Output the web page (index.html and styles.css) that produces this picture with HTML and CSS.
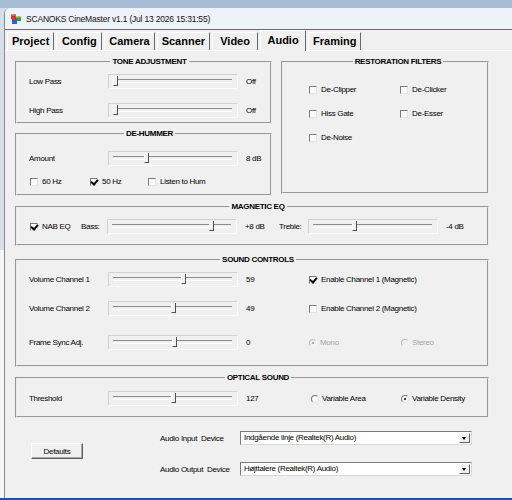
FILE: index.html
```html
<!DOCTYPE html>
<html lang="en">
<head>
    <meta charset="UTF-8">
    <title>SCANOKS CineMaster - Audio</title>
    <link rel="stylesheet" href="styles.css">
</head>
<body>

<div class="window">
    <div class="titlebar">
        <svg class="app-icon" width="12" height="12" viewBox="0 0 12 12">
            <rect x="1" y="1" width="5" height="5" fill="#d8322c"/>
            <rect x="6" y="3" width="5" height="5" fill="#3f9b3a"/>
            <rect x="2" y="6" width="5" height="5" fill="#2f63c8"/>
            <rect x="1" y="1" width="5" height="1.5" fill="#f07a6a"/>
            <rect x="6" y="3" width="5" height="1.5" fill="#8fd37f"/>
        </svg>
        <span>SCANOKS CineMaster v1.1 (Jul 13 2026 15:31:55)</span>
    </div>

    <div class="tabs">
        <div class="tab">Project</div>
        <div class="tab">Config</div>
        <div class="tab">Camera</div>
        <div class="tab">Scanner</div>
        <div class="tab">Video</div>
        <div class="tab active">Audio</div>
        <div class="tab">Framing</div>
    </div>

    <div class="panel">
        <div class="top-row">
            <div class="left-col">
                <fieldset class="group tone">
                    <legend>TONE ADJUSTMENT</legend>
                    <div class="sliders">
                        <span>Low Pass</span>
                        <div class="slider"><i class="thumb" style="left:4px"></i></div>
                        <span class="val">Off</span>
                        <span>High Pass</span>
                        <div class="slider"><i class="thumb" style="left:4px"></i></div>
                        <span class="val">Off</span>
                    </div>
                </fieldset>

                <fieldset class="group hum">
                    <legend>DE-HUMMER</legend>
                    <div class="sliders">
                        <span>Amount</span>
                        <div class="slider"><i class="thumb" style="left:35px"></i></div>
                        <span class="val">8 dB</span>
                    </div>
                    <div class="hum-checks">
                        <label class="check"><span class="cb"></span>60 Hz</label>
                        <label class="check"><span class="cb on"></span>50 Hz</label>
                        <label class="check"><span class="cb"></span>Listen to Hum</label>
                    </div>
                </fieldset>
            </div>

            <fieldset class="group restore">
                <legend>RESTORATION FILTERS</legend>
                <div class="filter-grid">
                    <label class="check"><span class="cb"></span>De-Clipper</label>
                    <label class="check"><span class="cb"></span>De-Clicker</label>
                    <label class="check"><span class="cb"></span>Hiss Gate</label>
                    <label class="check"><span class="cb"></span>De-Esser</label>
                    <label class="check"><span class="cb"></span>De-Noise</label>
                </div>
            </fieldset>
        </div>

        <fieldset class="group mag">
            <legend>MAGNETIC EQ</legend>
            <div class="eq-row">
                <label class="check nab"><span class="cb on"></span>NAB EQ</label>
                <span>Bass:</span>
                <div class="slider"><i class="thumb" style="left:101px"></i></div>
                <span class="val">+8 dB</span>
                <span>Treble:</span>
                <div class="slider"><i class="thumb" style="left:43px"></i></div>
                <span class="val">-4 dB</span>
            </div>
        </fieldset>

        <fieldset class="group sound">
            <legend>SOUND CONTROLS</legend>
            <div class="sound-grid">
                <span>Volume Channel 1</span>
                <div class="slider"><i class="thumb" style="left:72px"></i></div>
                <span class="val">59</span>
                <label class="check"><span class="cb on"></span>Enable Channel 1 (Magnetic)</label>

                <span>Volume Channel 2</span>
                <div class="slider"><i class="thumb" style="left:62px"></i></div>
                <span class="val">49</span>
                <label class="check"><span class="cb"></span>Enable Channel 2 (Magnetic)</label>

                <span class="last">Frame Sync Adj.</span>
                <div class="slider last"><i class="thumb" style="left:63px"></i></div>
                <span class="val last">0</span>
                <div class="radios last">
                    <label class="radio off"><span class="rb on"></span>Mono</label>
                    <label class="radio off"><span class="rb"></span>Stereo</label>
                </div>
            </div>
        </fieldset>

        <fieldset class="group optical">
            <legend>OPTICAL SOUND</legend>
            <div class="optical-grid">
                <span>Threshold</span>
                <div class="slider"><i class="thumb" style="left:62px"></i></div>
                <span class="val">127</span>
                <div class="radios">
                    <label class="radio"><span class="rb"></span>Variable Area</label>
                    <label class="radio"><span class="rb on"></span>Variable Density</label>
                </div>
            </div>
        </fieldset>

        <div class="bottom">
            <button class="btn">Defaults</button>
            <div class="devices">
                <span>Audio Input&nbsp; Device</span>
                <div class="combo"><span>Indgående linje (Realtek(R) Audio)</span><i class="drop"></i></div>
                <span>Audio Output&nbsp; Device</span>
                <div class="combo"><span>Højttalere (Realtek(R) Audio)</span><i class="drop"></i></div>
            </div>
        </div>
    </div>
</div>

</body>
</html>
```

FILE: styles.css
```css
* { box-sizing: border-box; }
body {
    margin: 0; width: 512px; height: 500px; overflow: hidden;
    padding: 8px 0 0 4px;
    background: linear-gradient(to bottom, #a7bdd6 0 8px, #d6dee8 8px 250px, #f7f7f7 250px 498px, #1d568f 498px);
    font-family: "Liberation Sans", Arial, sans-serif;
    font-size: 8px; letter-spacing: -0.3px; color: #000;
}

/* Window frame */
.window { width: 512px; height: 490px; background: #f0f0f0; border-left: 1px solid #8a8a8a; border-top-left-radius: 6px; overflow: hidden; display: flex; flex-direction: column; }
.titlebar { height: 22px; background: #eef3fa; display: flex; align-items: center; gap: 4px; padding-left: 5px; font-size: 8.5px; letter-spacing: -0.2px; color: #111; border-bottom: 1px solid #6c6c6c; }

/* Tabs */
.tabs { height: 21px; display: flex; align-items: flex-end; gap: 2px; padding-left: 2px; }
.tab { height: 19px; min-width: 46px; padding: 0 4px; text-align: center; font-weight: bold; font-size: 11px; letter-spacing: 0; line-height: 17px; background: #f0f0f0; border: 1px solid; border-color: #fff #6a6a6a #6a6a6a #fff; }
.tab.active { height: 21px; line-height: 19px; border-bottom: none; position: relative; z-index: 1; }

.panel { flex: 1; padding: 6px 0 0 10px; border-top: 1px solid #fff; margin-top: -1px; }

/* Group boxes */
.group { margin: 0; padding: 0 0 0 12px; min-width: 0; border: 2px groove #ececec; }
.group legend { margin: 0 auto; padding: 0 2px; font-weight: bold; line-height: 10px; }

.top-row { display: grid; grid-template-columns: 257px 208px; column-gap: 9px; }
.tone { height: 67px; padding-top: 7px; }
.hum { height: 67px; margin-top: 5px; padding-top: 12px; }
.restore { height: 137px; padding: 17px 0 0 26px; }
.mag { width: 474px; height: 44px; margin-top: 6px; padding-top: 7px; }
.sound { width: 474px; height: 112px; margin-top: 9px; padding-top: 7px; }
.optical { width: 474px; height: 45px; margin-top: 6px; padding-top: 8px; }

/* Sliders */
.sliders { display: grid; grid-template-columns: 79px 130px auto; row-gap: 14px; align-items: center; }
.slider { position: relative; width: 130px; height: 15px; border: 1px solid; border-color: #d2d2d2 #fbfbfb #fbfbfb #d2d2d2; }
.slider::before { content: ""; position: absolute; left: 4px; right: 5px; top: 4px; height: 2px; border-top: 1px solid #8c8c8c; border-bottom: 1px solid #fff; }
.thumb { position: absolute; top: 1px; width: 5px; height: 10px; background: #f0f0f0; border-left: 1px solid #fff; border-right: 1px solid #4f4f4f; border-bottom: 1px solid #4f4f4f; }
.val { padding-left: 8px; }

/* Checkboxes and radios */
.check, .radio { display: flex; align-items: center; gap: 4px; height: 11px; white-space: nowrap; }
.radio { gap: 3px; }
.cb { position: relative; width: 8px; height: 8px; background: #fbfbfb; border: 1px solid; border-color: #7a7a7a #e4e4e4 #e4e4e4 #7a7a7a; }
.cb.on::after { content: ""; position: absolute; left: 1px; top: -1px; width: 3px; height: 5px; border-right: 2px solid #000; border-bottom: 2px solid #000; transform: rotate(40deg); }
.rb { position: relative; width: 8px; height: 8px; border-radius: 50%; background: #fbfbfb; border: 1px solid; border-color: #7a7a7a #e4e4e4 #e4e4e4 #7a7a7a; }
.rb.on::after { content: ""; position: absolute; left: 2px; top: 2px; width: 2px; height: 2px; border-radius: 50%; background: #000; }
.radio.off { color: #a6a6a6; }
.radio.off .rb { background: #f0f0f0; border-color: #bdbdbd #f6f6f6 #f6f6f6 #bdbdbd; }
.radio.off .rb.on::after { background: #9a9a9a; }

.hum-checks { display: grid; grid-template-columns: 60px 58px auto; margin: 10px 0 0 1px; }
.filter-grid { display: grid; grid-template-columns: 91px auto; row-gap: 13px; }

.eq-row { display: grid; grid-template-columns: 52px 26px 130px 42px 29px 130px auto; align-items: center; }
.nab { margin-left: 1px; }

.sound-grid, .optical-grid { display: grid; grid-template-columns: 79px 130px 71px auto; row-gap: 14px; align-items: center; }
.optical-grid { grid-template-columns: 79px 130px 73px auto; }
.sound-grid .last { margin-top: 5px; }
.radios { display: grid; grid-template-columns: 92px auto; }
.optical-grid .radios { grid-template-columns: 90px auto; }

/* Bottom area */
.bottom { display: flex; align-items: flex-start; margin-top: 13px; }
.btn { margin: 12px 0 0 16px; width: 52px; height: 16px; padding: 0; font: inherit; letter-spacing: inherit; background: #f0f0f0; border: 1px solid; border-color: #fff #5f5f5f #5f5f5f #fff; box-shadow: inset -1px -1px #a8a8a8; }
.devices { margin-left: 77px; display: grid; grid-template-columns: 80px 232px; row-gap: 17px; align-items: center; white-space: nowrap; }
.combo { position: relative; height: 14px; background: #fff; border: 1px solid; border-color: #7a7a7a #d8d8d8 #d8d8d8 #7a7a7a; padding-left: 3px; line-height: 12px; }
.drop { position: absolute; right: 1px; top: 1px; width: 11px; height: 10px; background: #f0f0f0; border: 1px solid; border-color: #fff #5f5f5f #5f5f5f #fff; }
.drop::after { content: ""; position: absolute; left: 2px; top: 3px; border-left: 2.5px solid transparent; border-right: 2.5px solid transparent; border-top: 3px solid #000; }
```
